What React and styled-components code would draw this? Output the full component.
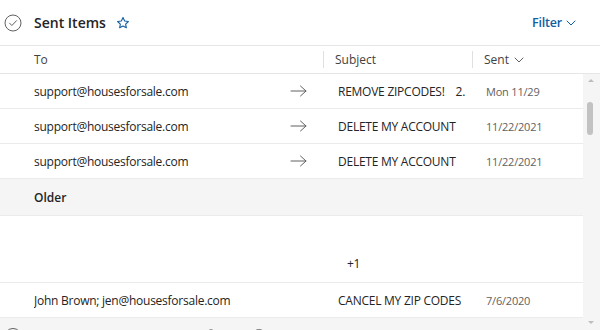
import React from "react";
import styled, { createGlobalStyle } from "styled-components";

const Global = createGlobalStyle`
  html, body { margin: 0; padding: 0; }
  body { font-family: "Open Sans", "Noto Sans", sans-serif; background: #f5f5f5; }
`;

const Page = styled.div`
  width: 600px;
  height: 330px;
  overflow: hidden;
  background: #f5f5f5;
  display: flex;
  flex-direction: column;
`;

const TopBar = styled.div`
  height: 45px;
  flex: none;
  display: flex;
  align-items: center;
  background: #fff;
  border-bottom: 1px solid #e6e6e6;
  padding: 0 24px 0 4px;
`;

const IconBox = styled.span`
  display: inline-flex;
  align-items: center;
  justify-content: center;
  width: ${(p) => p.$w || 18}px;
  margin-left: ${(p) => p.$ml || 0}px;
  color: ${(p) => p.$color || "#616161"};
`;

const Title = styled.h1`
  margin: 0 0 0 12px;
  font-size: 14px;
  font-weight: 600;
  color: #242424;
`;

const Spacer = styled.div`
  flex: 1;
`;

const FilterButton = styled.button`
  border: 0;
  background: none;
  padding: 0;
  display: flex;
  align-items: center;
  gap: 4px;
  font-family: inherit;
  font-size: 12.5px;
  font-weight: 600;
  letter-spacing: -0.2px;
  color: #115ea3;
`;

const ColumnHeader = styled.div`
  height: 27px;
  flex: none;
  display: flex;
  align-items: center;
  background: #fff;
  border-bottom: 1px solid #e6e6e6;
  padding-left: 34px;
  font-size: 12px;
  color: #424242;
`;

const HeadCell = styled.div`
  width: ${(p) => p.$w}px;
  height: 17px;
  display: flex;
  align-items: center;
  gap: 5px;
  box-sizing: border-box;
  padding-left: ${(p) => (p.$divider ? 11 : 0)}px;
  border-left: ${(p) => (p.$divider ? "1px solid #e0e0e0" : "0")};
`;

const Body = styled.div`
  flex: 1;
  display: flex;
  min-height: 0;
`;

const List = styled.div`
  flex: 1;
  display: flex;
  flex-direction: column;
`;

const Row = styled.div`
  height: ${(p) => p.$h || 35}px;
  flex: none;
  display: grid;
  grid-template-columns: 34px 250px 54px 148px 1fr;
  align-items: ${(p) => (p.$bottom ? "end" : "center")};
  padding-bottom: ${(p) => (p.$bottom ? 10 : 0)}px;
  box-sizing: border-box;
  background: #fff;
  border-bottom: 1px solid #ebebeb;
  font-size: 12px;
  letter-spacing: -0.25px;
  color: #242424;
`;

const Cell = styled.div`
  grid-column: ${(p) => p.$col};
  display: flex;
  align-items: center;
  gap: 11px;
  white-space: nowrap;
  overflow: hidden;
  padding-left: ${(p) => p.$pl || 0}px;
`;

const DateText = styled.span`
  font-size: 11px;
  letter-spacing: -0.2px;
  color: #616161;
`;

const GroupHeader = styled.div`
  height: 36px;
  flex: none;
  display: flex;
  align-items: center;
  padding-left: 34px;
  font-size: 12px;
  font-weight: 600;
  color: #242424;
  border-bottom: 1px solid #ebebeb;
`;

const PeekRow = styled.div`
  height: 20px;
  flex: none;
  position: relative;
`;

const PeekCircle = styled.span`
  position: absolute;
  left: 4px;
  top: 10px;
  width: 16px;
  height: 16px;
  border: 1px solid #616161;
  border-radius: 50%;
`;

const PeekMark = styled.span`
  position: absolute;
  left: ${(p) => p.$x}px;
  top: 11px;
  width: 4px;
  height: 4px;
  border: 1px solid #8a8a8a;
  border-radius: ${(p) => (p.$round ? "50%" : "1px")};
`;

const Scroll = styled.div`
  width: 17px;
  flex: none;
  position: relative;
  background: #f5f5f5;
`;

const ScrollArrow = styled.span`
  position: absolute;
  left: 5px;
  top: ${(p) => (p.$down ? "auto" : "5px")};
  bottom: ${(p) => (p.$down ? "6px" : "auto")};
  width: 0;
  height: 0;
  border-left: 3px solid transparent;
  border-right: 3px solid transparent;
  ${(p) =>
    p.$down
      ? "border-top: 3px solid #bdbdbd;"
      : "border-bottom: 3px solid #bdbdbd;"}
`;

const Thumb = styled.span`
  position: absolute;
  left: 4px;
  top: 28px;
  width: 6px;
  height: 33px;
  border-radius: 3px;
  background: #c2c2c2;
`;

const CheckCircle = () => (
  <svg width="18" height="18" viewBox="0 0 18 18" fill="none">
    <circle cx="9" cy="9" r="8" stroke="#616161" strokeWidth="1" />
    <path d="M5.6 9.2l2.3 2.3 4.6-4.8" stroke="#616161" strokeWidth="1" strokeLinecap="round" strokeLinejoin="round" />
  </svg>
);

const Star = () => (
  <svg width="14" height="14" viewBox="0 0 20 20" fill="none">
    <path
      d="M10 2.2l2.35 4.9 5.35.72-3.9 3.72.97 5.3L10 14.3l-4.77 2.54.97-5.3L2.3 7.82l5.35-.72z"
      stroke="#115ea3"
      strokeWidth="1.6"
      strokeLinejoin="round"
    />
  </svg>
);

const Chevron = ({ color = "#616161" }) => (
  <svg width="10" height="6" viewBox="0 0 10 6" fill="none">
    <path d="M1 1l4 4 4-4" stroke={color} strokeWidth="1" strokeLinecap="round" strokeLinejoin="round" />
  </svg>
);

const Arrow = () => (
  <svg width="17" height="12" viewBox="0 0 17 12" fill="none">
    <path d="M1 6h15M10.5 1l5.5 5-5.5 5" stroke="#616161" strokeWidth="1" strokeLinecap="round" strokeLinejoin="round" />
  </svg>
);

const recent = [
  { to: "support@housesforsale.com", subject: "REMOVE ZIPCODES!", count: "2.", date: "Mon 11/29" },
  { to: "support@housesforsale.com", subject: "DELETE MY ACCOUNT", date: "11/22/2021" },
  { to: "support@housesforsale.com", subject: "DELETE MY ACCOUNT", date: "11/22/2021" },
];

export default function App() {
  return (
    <>
      <Global />
      <Page>
        <TopBar>
          <IconBox $w={18}>
            <CheckCircle />
          </IconBox>
          <Title>Sent Items</Title>
          <IconBox $w={14} $ml={10}>
            <Star />
          </IconBox>
          <Spacer />
          <FilterButton>
            Filter
            <Chevron color="#115ea3" />
          </FilterButton>
        </TopBar>
        <ColumnHeader>
          <HeadCell $w={289}>To</HeadCell>
          <HeadCell $w={149} $divider>Subject</HeadCell>
          <HeadCell $w={100} $divider>
            Sent <Chevron />
          </HeadCell>
        </ColumnHeader>
        <Body>
          <List>
            {recent.map((m, i) => (
              <Row key={i}>
                <Cell $col={2}>{m.to}</Cell>
                <Cell $col={3} $pl={6}>
                  <Arrow />
                </Cell>
                <Cell $col={4}>
                  {m.subject}
                  {m.count && <span>{m.count}</span>}
                </Cell>
                <Cell $col={5}>
                  <DateText>{m.date}</DateText>
                </Cell>
              </Row>
            ))}
            <GroupHeader>Older</GroupHeader>
            <Row $h={67} $bottom>
              <Cell $col={4} $pl={9}>+1</Cell>
            </Row>
            <Row>
              <Cell $col={2}>John Brown; jen@housesforsale.com</Cell>
              <Cell $col={4}>CANCEL MY ZIP CODES</Cell>
              <Cell $col={5}>
                <DateText>7/6/2020</DateText>
              </Cell>
            </Row>
            <PeekRow>
              <PeekCircle />
              <PeekMark $x={208} $round />
              <PeekMark $x={256} />
            </PeekRow>
          </List>
          <Scroll>
            <ScrollArrow />
            <Thumb />
            <ScrollArrow $down />
          </Scroll>
        </Body>
      </Page>
    </>
  );
}
